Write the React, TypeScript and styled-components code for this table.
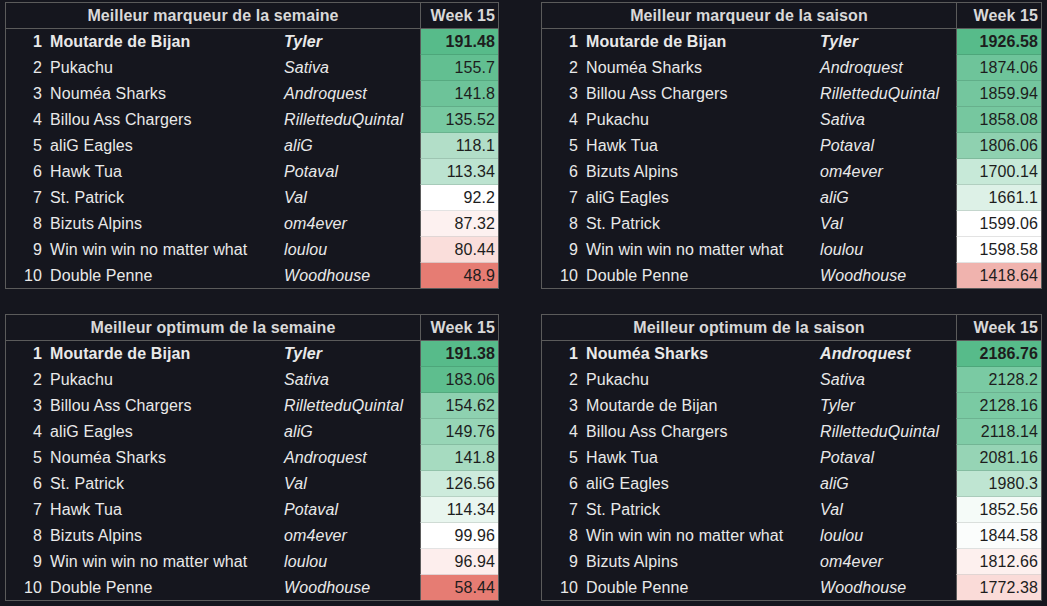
import styled, { createGlobalStyle } from "styled-components";

type Entry = [team: string, manager: string, score: string, tint: string];

type Board = {
  title: string;
  scoreWidth: number;
  rows: Entry[];
};

const RANK_WIDTH = 40;
const TEAM_WIDTH = 235;
const MANAGER_WIDTH = 139;

// colour scale as in the sheet: red (low) -> white (mid) -> green (high)
const boards: Board[] = [
  {
    title: "Meilleur marqueur de la semaine",
    scoreWidth: 78,
    rows: [
      ["Moutarde de Bijan", "Tyler", "191.48", "#57bb8a"],
      ["Pukachu", "Sativa", "155.7", "#62bf91"],
      ["Nouméa Sharks", "Androquest", "141.8", "#6dc399"],
      ["Billou Ass Chargers", "RilletteduQuintal", "135.52", "#78c9a1"],
      ["aliG Eagles", "aliG", "118.1", "#b2dec8"],
      ["Hawk Tua", "Potaval", "113.34", "#bce3d0"],
      ["St. Patrick", "Val", "92.2", "#ffffff"],
      ["Bizuts Alpins", "om4ever", "87.32", "#fdf1f0"],
      ["Win win win no matter what", "loulou", "80.44", "#fadedb"],
      ["Double Penne", "Woodhouse", "48.9", "#e67c73"],
    ],
  },
  {
    title: "Meilleur marqueur de la saison",
    scoreWidth: 85,
    rows: [
      ["Moutarde de Bijan", "Tyler", "1926.58", "#57bb8a"],
      ["Nouméa Sharks", "Androquest", "1874.06", "#6ec49a"],
      ["Billou Ass Chargers", "RilletteduQuintal", "1859.94", "#74c69e"],
      ["Pukachu", "Sativa", "1858.08", "#76c79f"],
      ["Hawk Tua", "Potaval", "1806.06", "#8fd1b0"],
      ["Bizuts Alpins", "om4ever", "1700.14", "#c7e9d8"],
      ["aliG Eagles", "aliG", "1661.1", "#ddf1e7"],
      ["St. Patrick", "Val", "1599.06", "#ffffff"],
      ["Win win win no matter what", "loulou", "1598.58", "#ffffff"],
      ["Double Penne", "Woodhouse", "1418.64", "#f0b3ae"],
    ],
  },
  {
    title: "Meilleur optimum de la semaine",
    scoreWidth: 78,
    rows: [
      ["Moutarde de Bijan", "Tyler", "191.38", "#57bb8a"],
      ["Pukachu", "Sativa", "183.06", "#5ebe8e"],
      ["Billou Ass Chargers", "RilletteduQuintal", "154.62", "#8ed1b0"],
      ["aliG Eagles", "aliG", "149.76", "#97d5b6"],
      ["Nouméa Sharks", "Androquest", "141.8", "#a6dbc0"],
      ["St. Patrick", "Val", "126.56", "#cdebdc"],
      ["Hawk Tua", "Potaval", "114.34", "#e9f6ef"],
      ["Bizuts Alpins", "om4ever", "99.96", "#ffffff"],
      ["Win win win no matter what", "loulou", "96.94", "#fdeeed"],
      ["Double Penne", "Woodhouse", "58.44", "#e67c73"],
    ],
  },
  {
    title: "Meilleur optimum de la saison",
    scoreWidth: 85,
    rows: [
      ["Nouméa Sharks", "Androquest", "2186.76", "#57bb8a"],
      ["Pukachu", "Sativa", "2128.2", "#7acaa3"],
      ["Moutarde de Bijan", "Tyler", "2128.16", "#7acaa3"],
      ["Billou Ass Chargers", "RilletteduQuintal", "2118.14", "#80cca7"],
      ["Hawk Tua", "Potaval", "2081.16", "#96d4b5"],
      ["aliG Eagles", "aliG", "1980.3", "#bfe5d2"],
      ["St. Patrick", "Val", "1852.56", "#f5fbf8"],
      ["Win win win no matter what", "loulou", "1844.58", "#fbfdfc"],
      ["Bizuts Alpins", "om4ever", "1812.66", "#fdf0ee"],
      ["Double Penne", "Woodhouse", "1772.38", "#fadbd8"],
    ],
  },
];

const Leaderboard = ({ board }: { board: Board }) => (
  <Sheet $scoreWidth={board.scoreWidth}>
    <colgroup>
      <Column $width={RANK_WIDTH} />
      <Column $width={TEAM_WIDTH} />
      <Column $width={MANAGER_WIDTH} />
      <Column $width={board.scoreWidth} />
    </colgroup>
    <thead>
      <tr>
        <TitleCell colSpan={3}>{board.title}</TitleCell>
        <WeekCell>Week 15</WeekCell>
      </tr>
    </thead>
    <tbody>
      {board.rows.map(([team, manager, score, tint], index) => (
        <Line key={team} $lead={index === 0}>
          <Rank>{index + 1}</Rank>
          <Team>{team}</Team>
          <Manager>{manager}</Manager>
          <Score $tint={tint}>{score}</Score>
        </Line>
      ))}
    </tbody>
  </Sheet>
);

export default function App() {
  return (
    <>
      <GlobalStyle />
      <Page>
        {boards.map((board) => (
          <Leaderboard key={board.title} board={board} />
        ))}
      </Page>
    </>
  );
}

const GlobalStyle = createGlobalStyle`
  *, *::before, *::after {
    box-sizing: border-box;
  }
  html, body {
    margin: 0;
    background: #15161e;
  }
  body {
    font-family: "Liberation Sans", Arial, sans-serif;
  }
`;

const Page = styled.div`
  display: grid;
  grid-template-columns: 494px 501px;
  column-gap: 42px;
  row-gap: 25px;
  align-items: start;
  padding: 2px 0 0 5px;
`;

const Sheet = styled.table<{ $scoreWidth: number }>`
  width: ${(p) => RANK_WIDTH + TEAM_WIDTH + MANAGER_WIDTH + p.$scoreWidth + 2}px;
  border-collapse: separate;
  border-spacing: 0;
  table-layout: fixed;
  border: 1px solid #5b5b5b;
  font-size: 16px;
  letter-spacing: 0.1px;
  color: #e9e9e9;
`;

const Column = styled.col<{ $width: number }>`
  width: ${(p) => p.$width}px;
`;

const HeadCell = styled.th`
  height: 26px;
  padding: 1px 3px 0;
  border-bottom: 1px solid #5b5b5b;
  font-weight: bold;
  color: #d9d9d9;
  white-space: nowrap;
`;

const TitleCell = styled(HeadCell)`
  text-align: center;
`;

const WeekCell = styled(HeadCell)`
  text-align: right;
  border-left: 1px solid #5b5b5b;
`;

const Line = styled.tr<{ $lead: boolean }>`
  font-weight: ${(p) => (p.$lead ? "bold" : "normal")};

  td {
    height: 26px;
    padding-top: 1px;
    padding-bottom: 0;
    border-bottom: 1px solid transparent;
    vertical-align: middle;
    white-space: nowrap;
    overflow: hidden;
  }

  &:last-child td {
    height: 25px;
    border-bottom: 0;
  }
`;

const Rank = styled.td`
  text-align: right;
  padding-right: 4px;
`;

const Team = styled.td`
  padding-left: 4px;
`;

const Manager = styled.td`
  padding-left: 3px;
  font-style: italic;
`;

const Score = styled.td<{ $tint: string }>`
  text-align: right;
  padding-right: 3px;
  color: #1d1d1d;
  background: ${(p) => p.$tint};
  border-left: 1px solid #5b5b5b;

  tr & {
    border-bottom-color: rgba(0, 0, 0, 0.11);
  }
`;
